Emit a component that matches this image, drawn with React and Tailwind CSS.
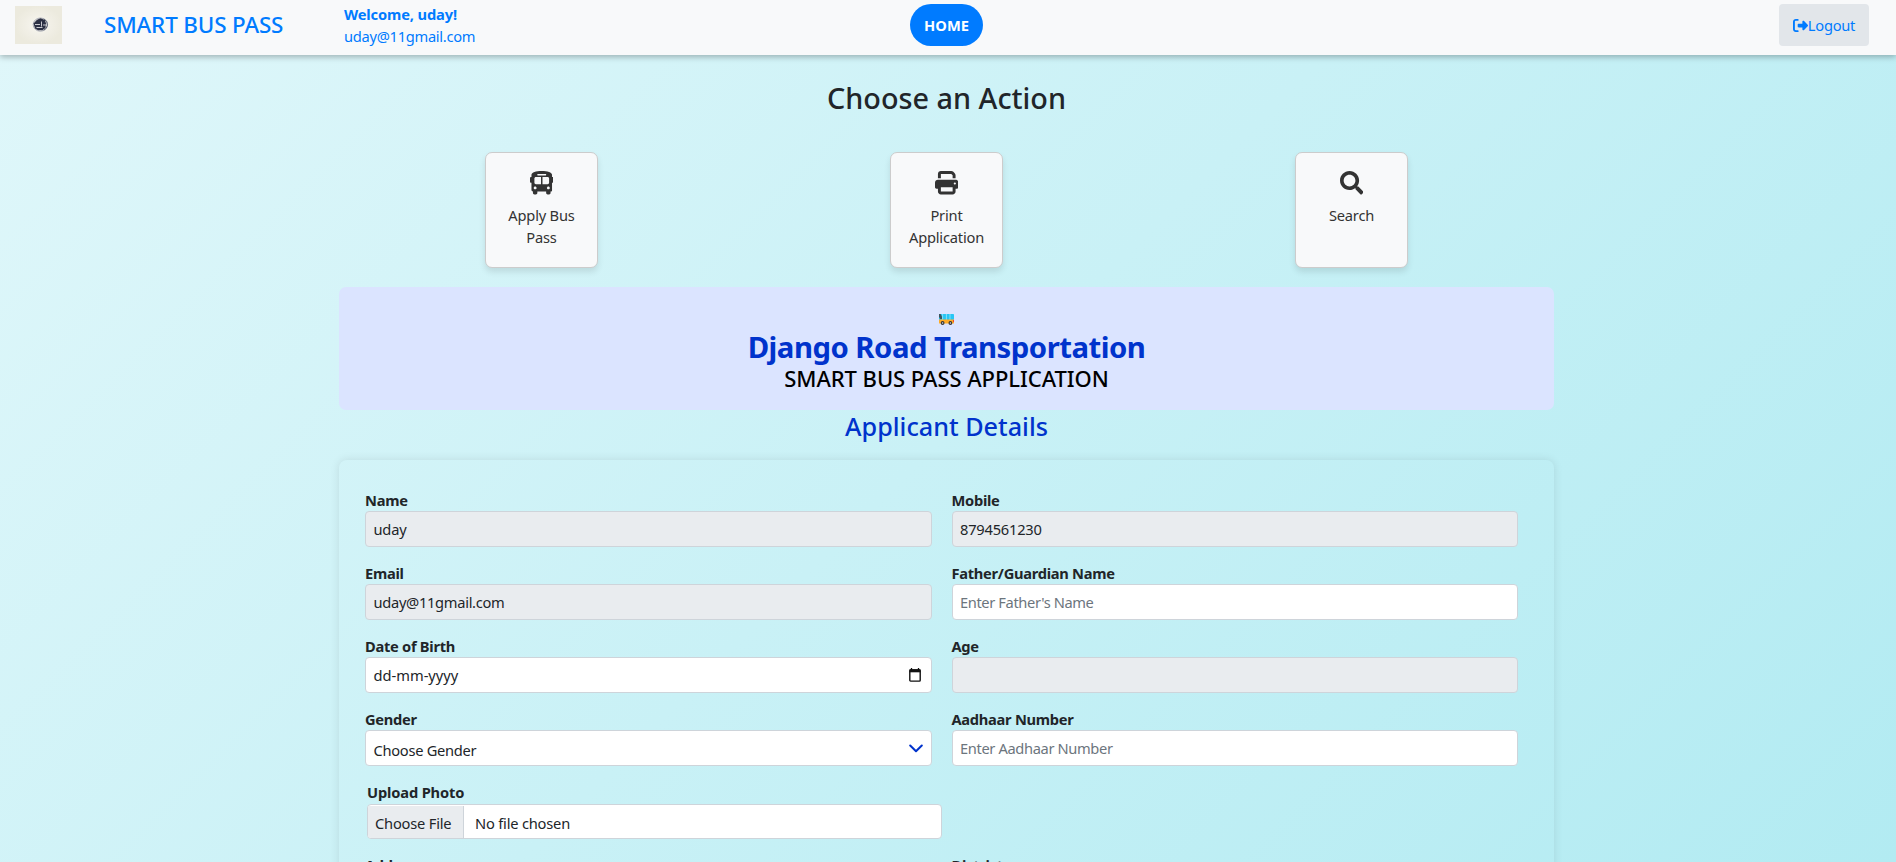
import React from "react";
import { FaPrint, FaRightFromBracket } from "react-icons/fa6";
import { FaBusAlt, FaSearch } from "react-icons/fa";

function Logo() {
  return (
    <svg className="h-[38px] w-[47px]" viewBox="0 0 47 38">
      <defs>
        <radialGradient id="paper">
          <stop offset="0" stopColor="#f8f7f1" />
          <stop offset="0.55" stopColor="#f1efe6" />
          <stop offset="1" stopColor="#eceade" />
        </radialGradient>
      </defs>
      <rect width="47" height="38" fill="url(#paper)" />
      <ellipse cx="25.4" cy="18.600" rx="7.200" ry="6.600" fill="none" stroke="#a9abb5" strokeWidth="1" />
      <path d="M18.500 17.500 22 13.800 25.500 12.300 30 14 31 17.500 30.500 22 27.500 24.200 23 24.200 20 22.500Z" fill="#2c3044" />
      <path d="M20 18.500h5M26.500 15.500v5M28 19h3.500M21.500 21.500h6" stroke="#c9cad0" strokeWidth="1" />
      <path d="M29 12.800q3.800 2.600 3.400 6.400-.6 3.600-3.600 5" fill="none" stroke="#555a6c" strokeWidth="1" />
    </svg>
  );
}

function MiniBus() {
  return (
    <svg className="h-[11px] w-[15px]" viewBox="0 0 15 11">
      <rect x="0" y="0" width="15" height="6" rx="0.8" fill="#26c6f5" />
      <path d="M3.600 0v6M7.400 0v6M11 0v6" stroke="#9be4fb" strokeWidth="0.8" />
      <path d="M0 0h1.600L3 2.600V5H1.200L0 3Z" fill="#3c5560" />
      <path d="M0 5.500h15V9q0 .6-.6.6H.6Q0 9.600 0 9Z" fill="#ffab26" />
      <rect x="14" y="6" width="1" height="2" fill="#f0442e" />
      <circle cx="3.600" cy="9" r="1.900" fill="#333" />
      <circle cx="11.400" cy="9" r="1.900" fill="#333" />
      <circle cx="3.600" cy="9" r="0.8" fill="#ddd" />
      <circle cx="11.400" cy="9" r="0.8" fill="#ddd" />
    </svg>
  );
}

function CalendarIcon() {
  return (
    <svg className="h-[14px] w-[12px]" viewBox="0 0 12 14">
      <path d="M2.500 0v2M9.500 0v2" stroke="#111" strokeWidth="1.300" />
      <rect x="0.8" y="1.900" width="10.400" height="11.200" rx="0.8" fill="none" stroke="#111" strokeWidth="1.400" />
      <rect x="0.5" y="1.300" width="11" height="3" fill="#111" />
    </svg>
  );
}

function ActionCard({ icon: Icon, children }) {
  return (
    <div className="flex w-[405px] justify-center">
      <div className="flex h-[116px] w-[113px] flex-col items-center rounded-[7px] border border-[#ccc] bg-[#f8f9fa] pt-[18px] text-center tracking-[-0.2px] text-[#333] shadow-[0_4px_6px_rgba(0,0,0,0.1)]">
        <Icon className="size-[23.5px] shrink-0" />
        <span className="mt-[9px]">{children}</span>
      </div>
    </div>
  );
}

function Field({ label, children }) {
  return (
    <div className="h-[73px]">
      <label className="block font-bold tracking-[-0.28px]">{label}</label>
      {children}
    </div>
  );
}

const box = "flex h-9 w-full items-center rounded-[4px] border border-[#ced4da] px-[7.5px] outline-none";

export default function App() {
  return (
    <div className="h-[862px] overflow-hidden bg-[linear-gradient(135deg,#e0f7fa,#b2ebf2)] font-['Noto_Sans','Open_Sans',sans-serif] text-[14.67px] leading-[22px] text-[#212529]">
      <nav className="flex h-[55px] items-center bg-[#f8f9fa] pb-[5px] pl-[15px] text-[#007bff] shadow-[0_2px_6px_rgba(0,0,0,0.28)]">
        <Logo />
        <div className="ml-[42px] w-[240px] text-[22.4px] leading-[30px] font-medium tracking-[-0.14px]">
          SMART BUS PASS
        </div>
        <div className="w-[566px]">
          <div className="font-bold tracking-[-0.13px]">Welcome, uday!</div>
          <div className="tracking-[-0.28px]">uday@11gmail.com</div>
        </div>
        <a className="flex h-[42px] w-[73px] items-center justify-center rounded-full bg-[#007bff] font-bold text-white">
          HOME
        </a>
        <a className="mr-[27px] ml-auto flex h-[42px] w-[90px] items-center justify-center rounded-[4px] bg-[#e2e6ea] tracking-[-0.25px]">
          <FaRightFromBracket className="size-[15px]" />
          Logout
        </a>
      </nav>

      <main className="ml-[339px] w-[1215px]">
        <h2 className="pt-[25px] text-center text-[28.8px] leading-[36px] font-medium">Choose an Action</h2>
        <div className="mt-9 flex">
          <ActionCard icon={FaBusAlt}>
            Apply Bus
            <br />
            Pass
          </ActionCard>
          <ActionCard icon={FaPrint}>
            Print
            <br />
            Application
          </ActionCard>
          <ActionCard icon={FaSearch}>Search</ActionCard>
        </div>

        <header className="mt-[19px] flex h-[123px] flex-col items-center rounded-[7px] bg-[#dbe4ff] pt-[27px]">
          <MiniBus />
          <h1 className="mt-[4px] text-[29.3px] leading-[36px] font-bold tracking-[-0.5px] text-[#0033cc]">
            Django Road Transportation
          </h1>
          <h3 className="text-[22px] leading-[26px] font-medium tracking-[-0.05px] text-black">
            SMART BUS PASS APPLICATION
          </h3>
        </header>
        <h2 className="pt-[1px] text-center text-[25.2px] leading-[30px] font-medium text-[#0033cc]">
          Applicant Details
        </h2>

        <form className="mt-[19px] h-[700px] rounded-lg pt-[29px] pl-[26px] shadow-[0_0_10px_rgba(0,0,0,0.1)]">
          <div className="grid w-[1153px] grid-cols-2 gap-x-5">
            <Field label="Name">
              <input readOnly value="uday" className={`${box} bg-[#e9ecef] tracking-[-0.2px]`} />
            </Field>
            <Field label="Mobile">
              <input readOnly value="8794561230" className={`${box} bg-[#e9ecef] tracking-[-0.22px]`} />
            </Field>
            <Field label="Email">
              <input readOnly value="uday@11gmail.com" className={`${box} bg-[#e9ecef] tracking-[-0.3px]`} />
            </Field>
            <Field label="Father/Guardian Name">
              <input placeholder="Enter Father's Name" className={`${box} bg-white tracking-[-0.38px] placeholder:text-[#6c757d]`} />
            </Field>
            <Field label="Date of Birth">
              <div className={`${box} justify-between bg-white pr-[10px]`}>
                <span>dd-mm-yyyy</span>
                <CalendarIcon />
              </div>
            </Field>
            <Field label="Age">
              <div className={`${box} bg-[#e9ecef]`} />
            </Field>
            <Field label="Gender">
              <div className={`${box} justify-between bg-white`}>
                <span className="pt-[3px] tracking-[-0.28px]">Choose Gender</span>
                <svg className="h-[9px] w-[14px]" viewBox="0 0 14 9" fill="none" stroke="#0033cc" strokeWidth="2" strokeLinecap="round" strokeLinejoin="round">
                  <path d="m1.200 1.500 5.800 5.800 5.800-5.800" />
                </svg>
              </div>
            </Field>
            <Field label="Aadhaar Number">
              <input placeholder="Enter Aadhaar Number" className={`${box} bg-white tracking-[-0.36px] placeholder:text-[#6c757d]`} />
            </Field>
          </div>

          <div className="ml-[2px] h-[73px] w-[575px]">
            <label className="block font-bold tracking-[-0.15px]">Upload Photo</label>
            <div className="mt-[1px] flex h-[35px] overflow-hidden rounded-[4px] border border-[#ced4da] bg-white">
              <span className="mt-[1px] flex w-[96px] items-center border-r border-[#ced4da] bg-[#e9ecef] pt-[2px] pl-[7px] tracking-[-0.2px]">
                Choose File
              </span>
              <span className="flex items-center pt-[3px] pl-[11px] tracking-[-0.2px]">No file chosen</span>
            </div>
          </div>

          <div className="grid w-[1153px] grid-cols-2 gap-x-5">
            <Field label="Address" />
            <Field label="District" />
          </div>
        </form>
      </main>
    </div>
  );
}
